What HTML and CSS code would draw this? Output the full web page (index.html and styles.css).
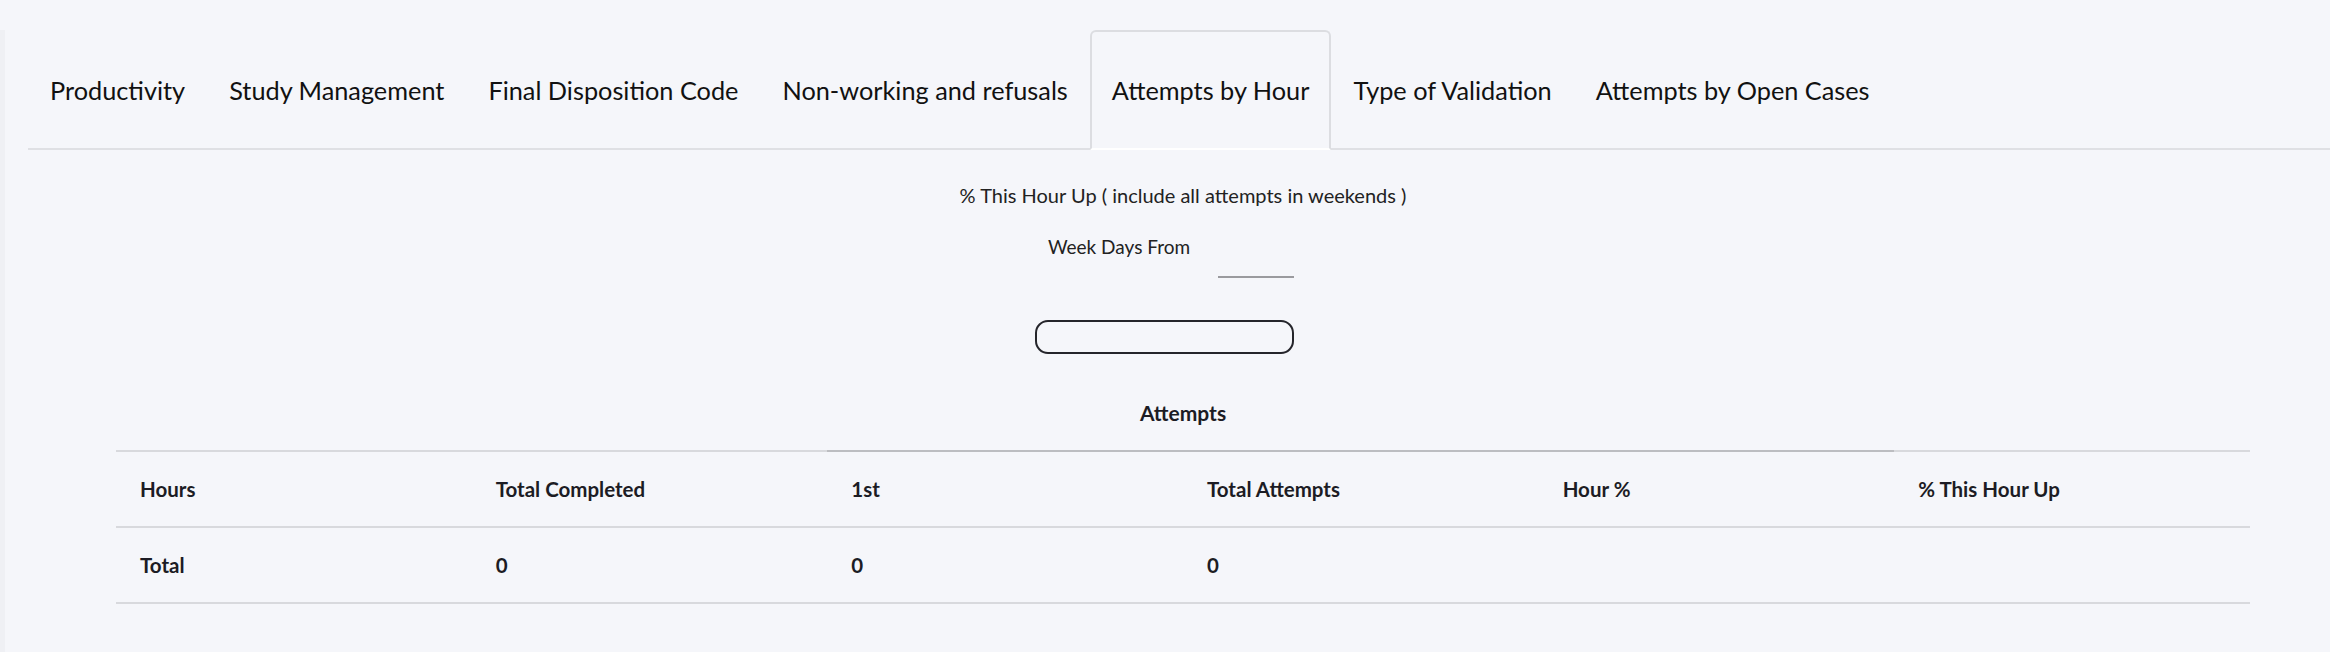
FILE: index.html
```html
<!DOCTYPE html>
<html lang="en">
<head>
<meta charset="utf-8">
<title>Attempts by Hour</title>
<link rel="stylesheet" href="styles.css">
</head>
<body>
<div class="page">
  <ul class="tabs">
    <li class="tab">Productivity</li>
    <li class="tab">Study Management</li>
    <li class="tab">Final Disposition Code</li>
    <li class="tab">Non-working and refusals</li>
    <li class="tab active">Attempts by Hour</li>
    <li class="tab">Type of Validation</li>
    <li class="tab">Attempts by Open Cases</li>
  </ul>
  <main class="content">
    <p class="note">% This Hour Up ( include all attempts in weekends )</p>
    <div class="week-row">
      <label class="week-label" for="wd">Week Days From</label>
      <input class="week-input" id="wd" type="text">
    </div>
    <div class="pill-row">
      <button class="pill" type="button"></button>
    </div>
    <div class="caption">Attempts</div>
    <table class="grid">
      <thead>
        <tr>
          <th>Hours</th>
          <th>Total Completed</th>
          <th class="grp">1st</th>
          <th class="grp">Total Attempts</th>
          <th class="grp">Hour %</th>
          <th>% This Hour Up</th>
        </tr>
      </thead>
      <tbody>
        <tr>
          <td>Total</td>
          <td>0</td>
          <td>0</td>
          <td>0</td>
          <td></td>
          <td></td>
        </tr>
      </tbody>
    </table>
  </main>
</div>
</body>
</html>
```
FILE: styles.css
```css
html, body {
  margin: 0;
  padding: 0;
  background: #f5f6fa;
}
body {
  font-family: Lato, "Open Sans", "Liberation Sans", sans-serif;
  color: #1c1c24;
}
.page {
  border-left: 5px solid #eff0f4;
  min-height: 652px;
  box-sizing: border-box;
}
.tabs {
  list-style: none;
  display: flex;
  margin: 30px 0 0 23px;
  padding: 0;
  border-bottom: 2px solid #dfe0e4;
}
.tab {
  box-sizing: border-box;
  height: 120px;
  margin-bottom: -2px;
  padding: 0 20px;
  display: flex;
  align-items: center;
  font-size: 25.3px;
  color: #111;
  border: 2px solid transparent;
  border-radius: 6px 6px 0 0;
  white-space: nowrap;
}
.tab.active {
  border-color: #dcdde1;
  border-bottom-color: #ffffff;
}
.content {
  padding: 0 80px 0 111px;
}
.note {
  margin: 31px 0 0;
  text-align: center;
  font-size: 20px;
  line-height: 28px;
  color: #222;
}
.week-row {
  display: flex;
  justify-content: center;
  align-items: flex-start;
  gap: 28px;
  margin-top: 24px;
  padding-right: 24px;
}
.week-label {
  font-size: 19px;
  line-height: 28px;
  color: #222;
}
.week-input {
  box-sizing: border-box;
  width: 76px;
  height: 45px;
  border: 0;
  border-bottom: 2px solid #9a9a9e;
  background: transparent;
  padding: 0;
  outline: none;
}
.pill-row {
  display: flex;
  justify-content: center;
  margin-top: 42px;
  padding-right: 38px;
}
.pill {
  box-sizing: border-box;
  width: 259px;
  height: 34px;
  border: 2px solid #25252b;
  border-radius: 13px;
  background: transparent;
  padding: 0;
}
.caption {
  margin-top: 45px;
  text-align: center;
  font-size: 21px;
  line-height: 28px;
  font-weight: 700;
  color: #1c1c24;
}
.grid {
  width: 100%;
  margin-top: 23px;
  border-collapse: collapse;
  table-layout: fixed;
}
.grid th,
.grid td {
  box-sizing: border-box;
  height: 76px;
  padding: 0 24px;
  text-align: left;
  font-size: 20.5px;
  font-weight: 700;
  color: #1c1c24;
  border-bottom: 2px solid #d8d9dd;
}
.grid th {
  border-top: 2px solid #d8d9dd;
}
.grid th.grp {
  border-top-color: #bcbdc1;
}
```
